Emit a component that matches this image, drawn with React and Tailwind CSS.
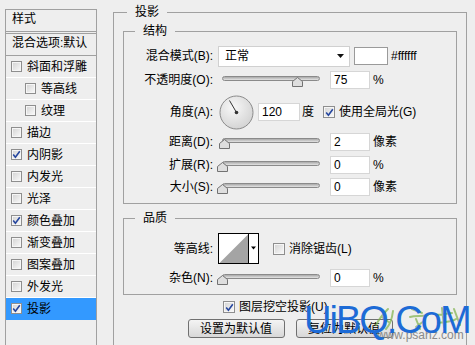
import React from "react";

const styleItems = [
  { label: "斜面和浮雕" },
  { label: "等高线", sub: true },
  { label: "纹理", sub: true },
  { label: "描边" },
  { label: "内阴影", on: true },
  { label: "内发光" },
  { label: "光泽" },
  { label: "颜色叠加", on: true },
  { label: "渐变叠加" },
  { label: "图案叠加" },
  { label: "外发光" },
  { label: "投影", on: true, active: true },
];

const Box = ({ on, className = "" }) => (
  <span
    className={
      "relative flex shrink-0 items-center justify-center border border-[#8e8e8e] bg-linear-to-br from-[#d2d2d2] to-[#fbfbfb] shadow-[inset_0_0_0_1px_#f6f6f6] " +
      className
    }
  >
    {on && (
      <svg width="9" height="9" viewBox="0 0 9 9" className="absolute">
        <path d="M1.2 4.6 L3.4 7.2 L7.8 1.2" fill="none" stroke="#25469e" strokeWidth="1.6" />
      </svg>
    )}
  </span>
);

const Slider = ({ pos }) => (
  <div className="relative ml-[6px] mt-[7px] h-[11px] w-[103px] shrink-0 self-start">
    <div className="absolute left-[3px] right-[2px] top-0 h-[5px] rounded-full border border-[#8a8a8a] bg-linear-to-b from-[#a9a9a9] to-[#e4e4e4]" />
    <svg className="absolute top-[1px]" style={{ left: pos - 5 }} width="11" height="10" viewBox="0 0 11 10">
      <path d="M0.5 4.5 L5.5 0.5 L10.5 4.5 L10.5 9.5 L0.5 9.5 Z" fill="#dedede" stroke="#727272" />
    </svg>
  </div>
);

const Field = ({ value, className = "w-[40px] ml-[8px]" }) => (
  <div className={"flex h-[18px] shrink-0 items-center border border-[#d6d6d6] bg-white pl-[3px] " + className}>
    {value}
  </div>
);

const Row = ({ label, className = "h-[22px]", children }) => (
  <div className={"flex items-center " + className}>
    <div className="w-[89px] shrink-0 text-right">{label}</div>
    {children}
  </div>
);

const Legend = ({ children, className = "ml-[11px]" }) => (
  <legend className={"px-[8px] leading-[14px] " + className}>{children}</legend>
);

const Button = ({ children }) => (
  <button className="flex h-[19px] w-[97px] items-center justify-center rounded-[3px] border border-[#707070] bg-linear-to-b from-[#f4f4f4] to-[#d8d8d8] leading-[14px]">
    {children}
  </button>
);

export default function App() {
  return (
    <div className="relative flex h-[345px] w-[475px] overflow-hidden bg-[#eeeeee] pl-[5px] font-['Liberation_Sans','Noto_Sans_CJK_SC',sans-serif] text-[12px] leading-[14px] text-black">
      {/* style list */}
      <div className="mt-[9px] h-[340px] w-[92px] shrink-0 border border-b-0 border-[#a0a0a0]">
        <div className="flex h-[22px] items-start border-b border-[#a0a0a0] pl-[6px] pt-[2px]">样式</div>
        <div className="mt-[1px] flex h-[23px] items-start border-y border-[#a0a0a0] pl-[6px] pt-[2px]">混合选项:默认</div>
        {styleItems.map((it) => (
          <div
            key={it.label}
            className={
              "flex h-[22px] items-center gap-[5px] border-b " +
              (it.active ? "border-[#3399ff] bg-[#3399ff] " : "border-white ") +
              (it.sub ? "pl-[19px]" : "pl-[5px]")
            }
          >
            <Box on={it.on} className="h-[11px] w-[11px]" />
            <span>{it.label}</span>
          </div>
        ))}
      </div>

      {/* settings */}
      <fieldset className="ml-[16px] mt-[5px] h-[360px] w-[354px] shrink-0 border border-[#a0a0a0] px-[9px]">
        <Legend className="ml-[4px]">投影</Legend>

        <fieldset className="mt-[5px] border border-[#a0a0a0] pb-[5px]">
          <Legend>结构</Legend>
          <Row label="混合模式(B):" className="mt-[7px] h-[22px]">
            <div className="ml-[5px] flex h-[21px] w-[132px] items-center justify-between border border-[#d0d0d0] bg-white pl-[6px] pr-[5px]">
              <span>正常</span>
              <svg width="7" height="4" viewBox="0 0 7 4">
                <path d="M0 0 L7 0 L3.5 4 Z" fill="#111" />
              </svg>
            </div>
            <div className="ml-[4px] h-[18px] w-[34px] border border-[#9a9a9a] bg-white" />
            <span className="ml-[3px]">#ffffff</span>
          </Row>
          <Row label="不透明度(O):" className="mt-[2px] h-[22px]">
            <Slider pos={78} />
            <Field value="75" />
            <span className="ml-[3px]">%</span>
          </Row>
          <Row label="角度(A):" className="mt-[4px] h-[34px]">
            <svg className="ml-[6px] shrink-0" width="35" height="35" viewBox="0 0 35 35">
              <defs>
                <radialGradient id="dial" cx="0.4" cy="0.35" r="0.7">
                  <stop offset="0" stopColor="#f8f8f8" />
                  <stop offset="1" stopColor="#d2d2d2" />
                </radialGradient>
              </defs>
              <circle cx="17.5" cy="17.5" r="16.5" fill="url(#dial)" stroke="#8a8a8a" />
              <line x1="17.5" y1="17.5" x2="10.5" y2="5.5" stroke="#333" strokeWidth="1" />
              <circle cx="17.5" cy="17.5" r="1.8" fill="#333" />
            </svg>
            <Field value="120" className="ml-[4px] w-[42px]" />
            <span className="ml-[2px]">度</span>
            <Box on className="ml-[9px] h-[12px] w-[12px]" />
            <span className="ml-[4px]">使用全局光(G)</span>
          </Row>
          <Row label="距离(D):" className="mt-[2px] h-[22px]">
            <Slider pos={5} />
            <Field value="2" />
            <span className="ml-[3px]">像素</span>
          </Row>
          <Row label="扩展(R):" className="mt-[1px] h-[22px]">
            <Slider pos={3} />
            <Field value="0" />
            <span className="ml-[3px]">%</span>
          </Row>
          <Row label="大小(S):" className="h-[22px]">
            <Slider pos={3} />
            <Field value="0" />
            <span className="ml-[3px]">像素</span>
          </Row>
        </fieldset>

        <fieldset className="mt-[7px] border border-[#a0a0a0] pb-[5px]">
          <Legend>品质</Legend>
          <Row label="等高线:" className="mt-[8px] h-[31px]">
            <svg className="ml-[5px] shrink-0" width="41" height="31" viewBox="0 0 41 31">
              <rect x="0.5" y="0.5" width="40" height="30" fill="#fff" stroke="#000" />
              <path d="M1.5 30 L30 1.5 L30 30 Z" fill="#a4a4a4" />
              <line x1="30.5" y1="0" x2="30.5" y2="31" stroke="#000" />
              <path d="M33 13.5 L38 13.5 L35.5 16.5 Z" fill="#000" />
            </svg>
            <Box className="ml-[14px] h-[12px] w-[12px]" />
            <span className="ml-[4px]">消除锯齿(L)</span>
          </Row>
          <Row label="杂色(N):" className="mt-[3px] h-[22px]">
            <Slider pos={3} />
            <Field value="0" />
            <span className="ml-[3px]">%</span>
          </Row>
        </fieldset>

        <div className="mt-[4px] flex h-[16px] items-center pl-[100px]">
          <Box on className="h-[12px] w-[12px]" />
          <span className="ml-[4px]">图层挖空投影(U)</span>
        </div>
        <div className="mt-[4px] flex justify-center gap-[11px]">
          <Button>设置为默认值</Button>
          <Button>复位为默认值</Button>
        </div>
      </fieldset>

      {/* watermark */}
      <svg className="pointer-events-none absolute left-[372px] top-[303px] opacity-70" width="95" height="30" viewBox="0 0 95 30">
        <g fill="none" stroke="#7fb24a" strokeWidth="2" strokeLinecap="round">
          <path d="M4 22 C8 14 12 10 16 6 M10 14 L18 20 M14 26 C18 22 20 16 21 8" />
          <path d="M40 6 L50 10 M38 14 C44 12 50 14 56 12 M44 16 L48 26 M52 18 L44 24" />
          <path d="M70 5 L72 24 M64 12 L80 10 M66 20 C72 18 78 20 84 16 M82 6 L88 22" />
        </g>
      </svg>
      <div className="pointer-events-none absolute left-[377px] top-[329px] text-[12px] leading-[12px] text-[#8a8a8a]">
        www.psahz.com
      </div>
      <div className="pointer-events-none absolute left-[304px] top-[298px] text-[38px] leading-[44px] tracking-[-2px] text-[#1d6bd6]">
        UiBQ.CoM
      </div>
    </div>
  );
}
